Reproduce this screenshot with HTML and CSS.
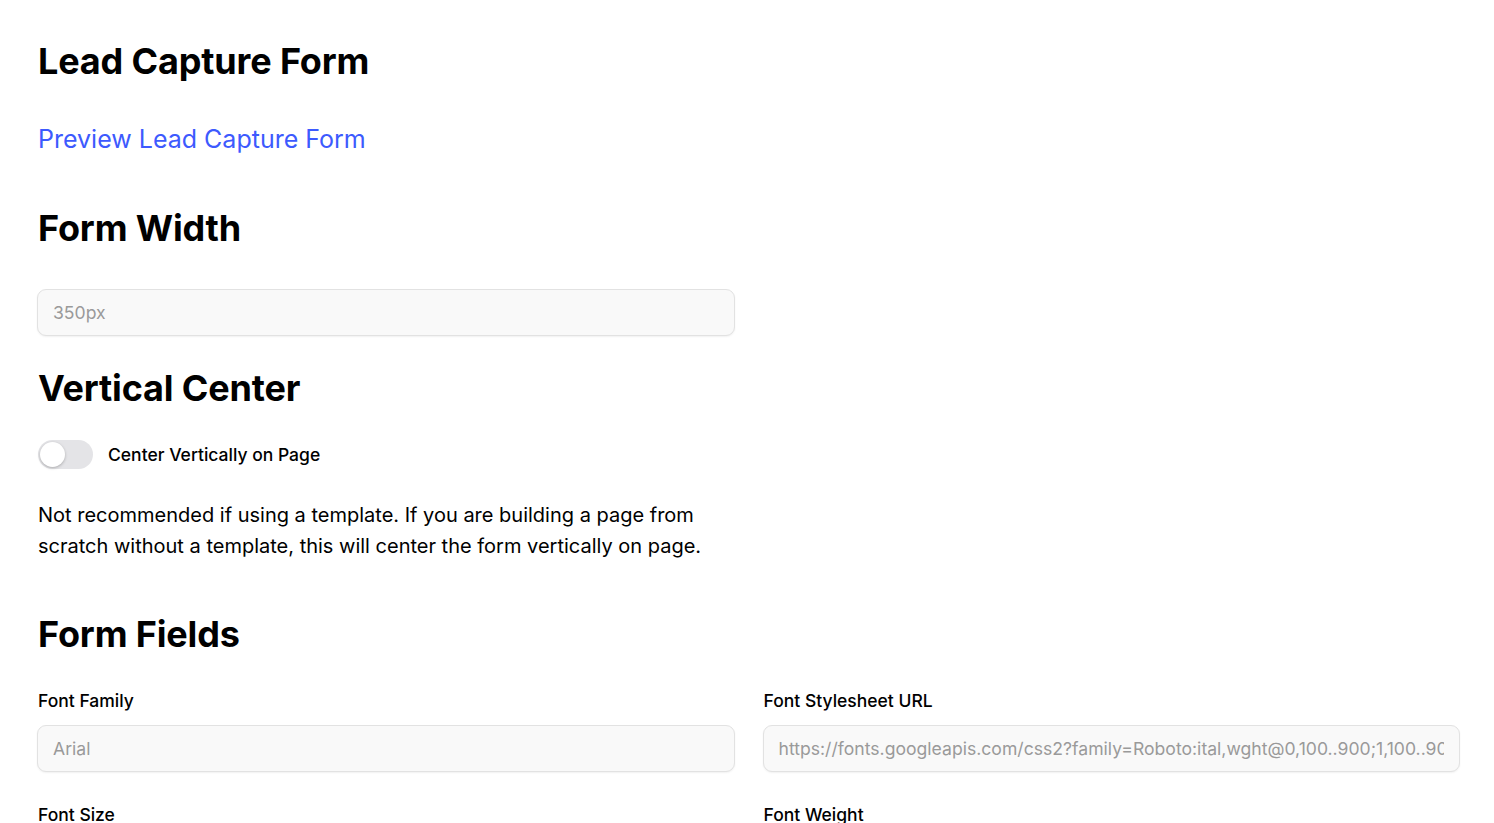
FILE: index.html
```html
<!DOCTYPE html>
<html>
    <head>
        <meta charset="utf-8">
        <title>Lead Capture Form</title>

        <link rel="stylesheet" href="styles.css">
    </head>
    <body>

        <div class="page-wrapper">
            <h1 class="title">Lead Capture Form</h1>

            <a class="preview-link" href="#">Preview Lead Capture Form</a>

            <!-- width of the form -->
            <h2 class="section-title section-title--width">Form Width</h2>

            <div class="half">
                <input type="text" class="text-input" placeholder="350px">
            </div>

            <!-- vertical center -->
            <h2 class="section-title section-title--center">Vertical Center</h2>

            <label class="switch-row">
                <input type="checkbox" class="switch-input">
                <span class="switch"></span>
                <span class="switch-label">Center Vertically on Page</span>
            </label>

            <p class="note">Not recommended if using a template. If you are building a page from scratch without a template, this will center the form vertically on page.</p>

            <!-- fields -->
            <h2 class="section-title section-title--fields">Form Fields</h2>

            <div class="field-grid">
                <div class="field">
                    <label class="field-label">Font Family</label>
                    <input type="text" class="text-input" placeholder="Arial">
                </div>
                <div class="field">
                    <label class="field-label">Font Stylesheet URL</label>
                    <input type="text" class="text-input" placeholder="https://fonts.googleapis.com/css2?family=Roboto:ital,wght@0,100..900;1,100..900&amp;display=swap">
                </div>
                <div class="field">
                    <label class="field-label">Font Size</label>
                    <input type="text" class="text-input" placeholder="16px">
                </div>
                <div class="field">
                    <label class="field-label">Font Weight</label>
                    <input type="text" class="text-input" placeholder="400">
                </div>
            </div>
        </div>

    </body>
</html>
```

FILE: styles.css
```css
/* Page */

body {
    margin: 0;
    background: #fff;
    color: #000;
    font-family: Inter, "Noto Sans", sans-serif;
}

.page-wrapper {
    padding: 39px 34px 40px 37px;
}

/* Headings */

.title {
    margin: 0 0 0 1px;
    font-size: 36px;
    line-height: 44px;
    font-weight: 700;
    letter-spacing: -0.15px;
}

.preview-link {
    display: block;
    margin: 40px 0 0 1px;
    font-size: 25px;
    line-height: 32px;
    color: #3d5afe;
    text-decoration: none;
}

.section-title {
    margin: 0 0 0 1px;
    font-size: 36px;
    line-height: 44px;
    font-weight: 700;
    letter-spacing: -0.15px;
}

.section-title--width {
    margin-top: 51px;
}

.section-title--center {
    margin-top: 30px;
}

.section-title--fields {
    margin-top: 50px;
}

/* Inputs */

.half {
    width: 698px;
    margin-top: 39px;
}

.text-input {
    box-sizing: border-box;
    display: block;
    width: 100%;
    height: 47px;
    padding: 0 15px;
    border: 1px solid #e2e2e2;
    border-radius: 9px;
    background: #f9f9f9;
    box-shadow: 0 1px 2px rgba(0, 0, 0, 0.06);
    font-family: Inter, "Noto Sans", sans-serif;
    font-size: 17.6px;
    color: #333;
    outline: none;
}

.text-input::placeholder {
    color: #9a9a9a;
}

/* Toggle switch */

.switch-row {
    display: flex;
    align-items: center;
    gap: 15px;
    margin: 30px 0 0 1px;
    cursor: pointer;
}

.switch-input {
    display: none;
}

.switch {
    position: relative;
    width: 55px;
    height: 29px;
    border-radius: 15px;
    background: #e4e4e7;
}

.switch::after {
    content: "";
    position: absolute; /* knob sits over the track */
    left: 2px;
    top: 2px;
    width: 25px;
    height: 25px;
    border-radius: 50%;
    background: #fff;
    box-shadow: 0 1px 3px rgba(0, 0, 0, 0.25);
    transition: transform 0.2s ease;
}

.switch-input:checked + .switch {
    background: #3d5afe;
}

.switch-input:checked + .switch::after {
    transform: translateX(26px);
}

.switch-label {
    font-size: 17.5px;
    line-height: 24px;
    font-weight: 500;
}

.note {
    width: 698px;
    margin: 31px 0 0 1px;
    font-size: 20px;
    line-height: 31px;
}

/* Field grid */

.field-grid {
    display: grid;
    grid-template-columns: 1fr 1fr;
    column-gap: 28px;
    row-gap: 31px;
    margin-top: 33px;
}

.field-label {
    display: block;
    margin: 0 0 12px 1px;
    font-size: 17.5px;
    line-height: 24px;
    font-weight: 500;
}
```
